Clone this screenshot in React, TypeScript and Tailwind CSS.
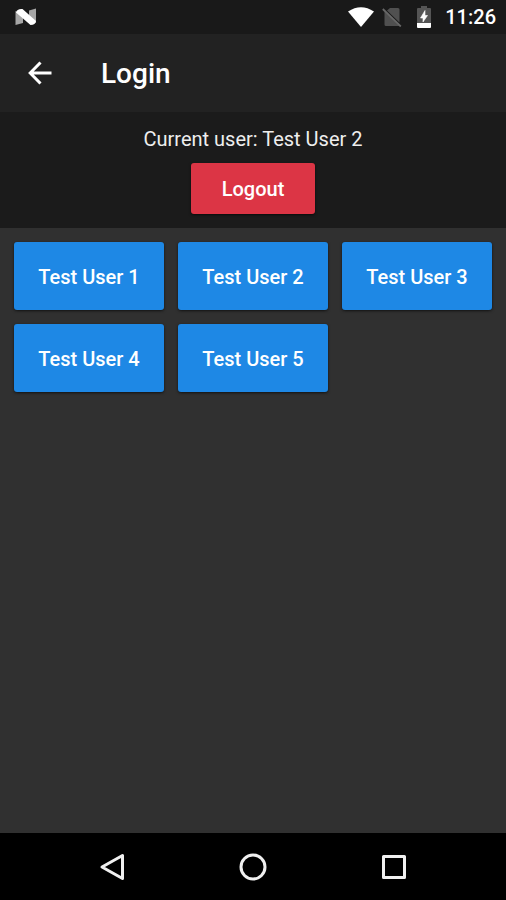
import type { ReactNode } from "react";

const users = ["Test User 1", "Test User 2", "Test User 3", "Test User 4", "Test User 5"];

function StatusBar() {
    return (
        <div className="flex h-[34px] flex-none items-center bg-[#191919] pr-[10px] pl-[15px]">
            <svg className="h-[18px] w-[22px]" viewBox="0 0 22 18" aria-hidden="true">
                <path d="M.5 3 8 7v8L.5 17zM21 .5V15l-7-4V2.500z" fill="#a6a6a6" />
                <path d="M1 4.500Q2 .5 7.500 1L21 13Q20.500 17 15.500 17z" fill="#fff" />
            </svg>
            <div className="ml-auto flex items-center text-white">
                <svg className="h-5 w-[26px]" viewBox="0 0 26 20" aria-hidden="true">
                    <path d="M0 4.500Q13-4 26 4.500L13 20z" fill="#fff" />
                </svg>
                <svg className="ml-2 h-5 w-5" viewBox="0 0 20 20" aria-hidden="true">
                    <path d="M8 1h8a1.500 1.500 0 0 1 1.500 1.500v13L5 3.500zM2.500 4.500 17.500 19H4a1.500 1.500 0 0 1-1.500-1.500z" fill="#505050" />
                    <path d="m.800 2 18 17.500" stroke="#686868" strokeWidth="1.800" />
                </svg>
                <svg className="ml-[15px] h-[22px] w-[14px]" viewBox="0 0 14 22" aria-hidden="true">
                    <path d="M4 0h6v2h3a1 1 0 0 1 1 1v17H0V3a1 1 0 0 1 1-1h3z" fill="#555" />
                    <path d="M0 17h14v4a1 1 0 0 1-1 1H1a1 1 0 0 1-1-1z" fill="#fff" />
                    <path d="M8 4.500 3.500 12H6v4l4.500-6.500H8z" fill="#fff" stroke="#fff" strokeWidth=".6" />
                </svg>
                <span className="ml-[14px] text-[20px] leading-6 font-medium">11:26</span>
            </div>
        </div>
    );
}

function Header() {
    return (
        <header className="flex h-[79px] flex-none items-center border-b border-[#1b1b1b] bg-[#222222] pl-7">
            <button type="button" aria-label="Back" className="h-6 w-6">
                <svg className="h-6 w-6" viewBox="0 0 24 24" fill="none" stroke="#fff" strokeWidth="3">
                    <path d="M23.500 12H2.500M12.500 1.500 2.200 12l10.300 10.500" />
                </svg>
            </button>
            <h1 className="ml-[49px] pt-0.5 text-[28px] leading-8 font-medium text-white">Login</h1>
        </header>
    );
}

function CurrentUser({ name }: { name: string }) {
    return (
        <section className="flex flex-none flex-col items-center gap-3 bg-[#1b1b1b] py-[14px]">
            <p className="text-[20px] leading-6 text-[#eeeeee]">Current user: {name}</p>
            <button
                type="button"
                className="h-[51px] w-[124px] rounded-[3px] bg-[#dc3545] text-[20px] font-medium text-white shadow-sm shadow-black/50"
            >
                Logout
            </button>
        </section>
    );
}

function UserGrid() {
    return (
        <main className="flex-auto bg-[#303030] p-[14px]">
            <div className="grid grid-cols-3 gap-[14px]">
                {users.map((user) => (
                    <button
                        key={user}
                        type="button"
                        className="h-[68px] rounded-[3px] bg-[#1e88e5] pt-0.5 text-[20px] font-medium text-white shadow-sm shadow-black/50"
                    >
                        {user}
                    </button>
                ))}
            </div>
        </main>
    );
}

function NavButton({ label, children }: { label: string; children: ReactNode }) {
    return (
        <button type="button" aria-label={label} className="flex items-center justify-center">
            <svg className="h-7 w-7" viewBox="0 0 28 28" fill="none" stroke="#f0f0f0" strokeWidth="3" strokeLinejoin="round">
                {children}
            </svg>
        </button>
    );
}

function NavBar() {
    return (
        <nav className="grid h-[67px] flex-none grid-cols-3 bg-black px-[42px]">
            <NavButton label="Back">
                <path d="M24.500 2.500v23L4 14z" />
            </NavButton>
            <NavButton label="Home">
                <circle cx="14" cy="14" r="12" />
            </NavButton>
            <NavButton label="Recent apps">
                <rect x="3.500" y="3.500" width="21" height="21" />
            </NavButton>
        </nav>
    );
}

function App() {
    return (
        <div className="flex min-h-screen flex-col font-[Roboto,sans-serif]">
            <StatusBar />
            <Header />
            <CurrentUser name="Test User 2" />
            <UserGrid />
            <NavBar />
        </div>
    );
}

export default App;
